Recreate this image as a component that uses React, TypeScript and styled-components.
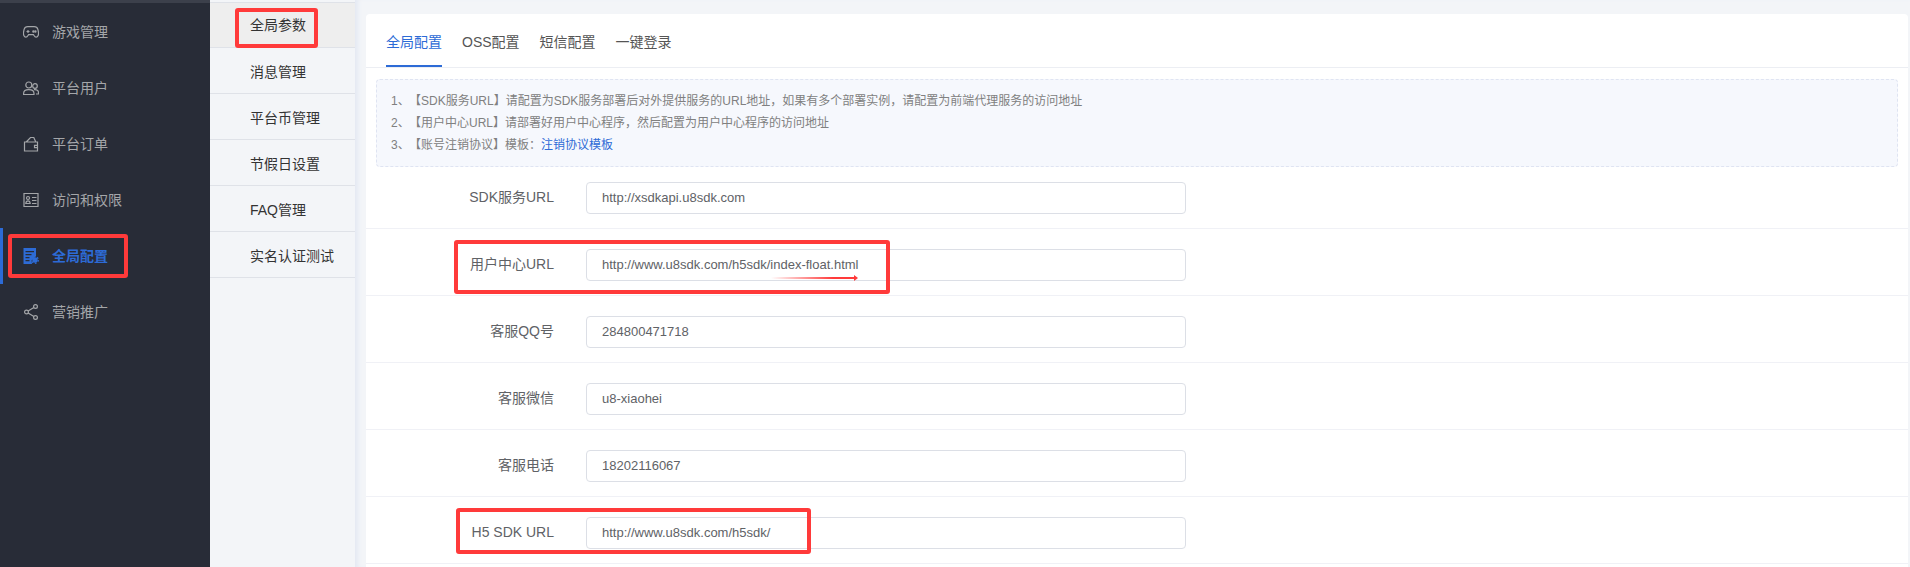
import { ReactNode } from 'react'
import styled, { createGlobalStyle } from 'styled-components'

const GlobalStyle = createGlobalStyle`
  html, body {
    margin: 0;
    padding: 0;
    height: 100%;
    overflow: hidden;
    background: #f3f5f8;
    font-family: "Liberation Sans", "Noto Sans CJK SC", sans-serif;
  }
  * { box-sizing: border-box; }
`

const Page = styled.div`
  position: relative;
  display: flex;
  width: 1910px;
  height: 567px;
  overflow: hidden;
`

const Sidebar = styled.aside`
  width: 210px;
  flex: none;
  padding-top: 1px;
  background: #282c37;
  border-top: 3px solid #3c404b;
`

const SideItem = styled.div<{ $active?: boolean }>`
  display: flex;
  align-items: center;
  height: 56px;
  padding-left: 23px;
  gap: 13px;
  font-size: 14px;
  color: ${({ $active }) => ($active ? '#2d6bd6' : '#a4a6a9')};
  font-weight: ${({ $active }) => ($active ? 600 : 400)};
  box-shadow: ${({ $active }) => ($active ? 'inset 3px 0 0 #2d6bd6' : 'none')};

  svg {
    width: 16px;
    height: 16px;
    flex: none;
  }

  span {
    padding-bottom: 2px;
  }
`

const SubMenu = styled.nav`
  width: 145px;
  flex: none;
  padding-top: 2px;
  background: #f3f5f8;
`

const SubItem = styled.div<{ $active?: boolean }>`
  display: flex;
  align-items: center;
  height: 46px;
  padding: 0 0 ${({ $active }) => ($active ? 2 : 0)}px 40px;
  font-size: 14px;
  color: #333;
  background: ${({ $active }) => ($active ? '#eeeeee' : 'transparent')};
  border-bottom: 1px solid #dfe2e8;
  ${({ $active }) => $active && 'border-top: 1px solid #dfe2e8;'}
`

const Content = styled.main`
  flex: 1;
  padding: 14px 2px 0 11px;
  background: #f3f5f8;
  box-shadow: inset 5px 0 4px -2px #e4e9f3;
`

const Card = styled.section`
  height: 100%;
  background: #fff;
  border-radius: 4px 4px 0 0;
`

const Tabs = styled.div`
  display: flex;
  gap: 20px;
  height: 54px;
  padding-left: 20px;
  border-bottom: 1px solid #eceef3;
`

const Tab = styled.div<{ $active?: boolean }>`
  height: 53px;
  line-height: 57px;
  font-size: 14px;
  color: ${({ $active }) => ($active ? '#2d6bd6' : '#555')};
  border-bottom: 2px solid ${({ $active }) => ($active ? '#2d6bd6' : 'transparent')};
`

const Notice = styled.div`
  height: 88px;
  margin: 11px 10px 0;
  padding: 10px 14px;
  font-size: 12px;
  line-height: 22px;
  color: #808080;
  background: #f6f8fd;
  border: 1px dashed #dfe4f2;
  border-radius: 4px;

  a {
    color: #2d6bd6;
    text-decoration: none;
  }
`

const Num = styled.span`
  display: inline-block;
  width: 18px;
`

const Form = styled.div`
  margin-top: -5px;
`

const FormRow = styled.div`
  display: flex;
  align-items: flex-start;
  height: 67px;
  padding-top: 20px;
  border-bottom: 1px solid #f0f1f6;
`

const Label = styled.label`
  width: 188px;
  flex: none;
  font-size: 14px;
  line-height: 30px;
  text-align: right;
  color: #606266;
`

const Input = styled.div`
  width: 600px;
  height: 32px;
  margin-left: 32px;
  padding-left: 15px;
  font-size: 13px;
  line-height: 30px;
  color: #606266;
  border: 1px solid #dcdfe6;
  border-radius: 4px;
`

const Mark = styled.div<{ $x: number; $y: number; $w: number; $h: number }>`
  position: absolute;
  left: ${({ $x }) => $x}px;
  top: ${({ $y }) => $y}px;
  width: ${({ $w }) => $w}px;
  height: ${({ $h }) => $h}px;
  border: 4px solid #ff3a3a;
  border-radius: 3px;
`

const Arrow = styled.div`
  position: absolute;
  left: 771px;
  top: 277px;
  width: 83px;
  height: 2px;
  background: linear-gradient(90deg, rgba(255, 58, 58, 0), #ff3a3a 75%);

  &::after {
    content: '';
    position: absolute;
    right: -4px;
    top: -2px;
    border-left: 4px solid #ff3a3a;
    border-top: 3px solid transparent;
    border-bottom: 3px solid transparent;
  }
`

const stroke = { fill: 'none', stroke: 'currentColor', strokeWidth: 1.2 }

const GameIcon = () => (
  <svg viewBox="0 0 16 16" {...stroke}>
    <path d="M4.800 2.600h6.400c2 0 3.200 1 3.700 2.800l.5 2.400c.5 2.700-.4 5.400-2.300 5.400-1.300 0-1.900-1.400-2.700-2.600H5.600c-.8 1.200-1.400 2.600-2.700 2.600C1 13.200.1 10.500.6 7.800l.5-2.400C1.600 3.600 2.800 2.600 4.800 2.600z" />
    <path d="M5 6v3M3.500 7.500h3" />
    <circle cx="10.400" cy="7.500" r=".6" fill="currentColor" />
    <circle cx="12.400" cy="7.500" r=".6" fill="currentColor" />
  </svg>
)

const UsersIcon = () => (
  <svg viewBox="0 0 16 16" {...stroke}>
    <circle cx="5.800" cy="5" r="3" />
    <circle cx="12" cy="6" r="2.300" />
    <path d="M.6 14.500v-1c0-2.400 2-3.800 5.200-3.800s5.200 1.400 5.200 3.800v1zM11 9.700c2.800-.3 4.500.8 4.500 3v1.300h-2.500" />
  </svg>
)

const WalletIcon = () => (
  <svg viewBox="0 0 16 16" {...stroke}>
    <path d="M1.500 6h13v9h-13zM3.200 6l4.300-4.500h3.300L12.800 6" />
    <path d="M14.500 9.300h-3v2.400h3" />
  </svg>
)

const IdIcon = () => (
  <svg viewBox="0 0 16 16" {...stroke}>
    <path d="M1 1.500h14v13H1z" />
    <circle cx="5" cy="6" r="1.500" />
    <path d="M2.800 11.500c.2-1.800 1-2.600 2.200-2.600s2 .8 2.200 2.600zM9 5.500h4.500M9 8.500h4.500M9 11.500h4.500" />
  </svg>
)

const ConfigIcon = () => (
  <svg viewBox="0 0 16 16">
    <path
      fill="currentColor"
      fillRule="evenodd"
      d="M.5 0h12.500v8l-4.500 4.500.5 3.500H.5zM2.500 3v1.300h8.500V3zm0 3v1.300h6V6zm0 3v1.300h4V9zm0 3v1.300h4V12z"
    />
    <circle cx="12" cy="12" r="2.700" fill="currentColor" />
    <circle cx="12" cy="12" r="3.300" fill="none" stroke="currentColor" strokeWidth="1.300" strokeDasharray="1.700 1.750" />
  </svg>
)

const ShareIcon = () => (
  <svg viewBox="0 0 16 16" {...stroke}>
    <circle cx="12.500" cy="2.500" r="1.900" />
    <circle cx="3.500" cy="8" r="1.900" />
    <circle cx="12.500" cy="13.500" r="1.900" />
    <path d="M10.900 3.500 5.100 7M5.100 9l5.800 3.500" />
  </svg>
)

const sideItems: { icon: ReactNode; label: string; active?: boolean }[] = [
  { icon: <GameIcon />, label: '游戏管理' },
  { icon: <UsersIcon />, label: '平台用户' },
  { icon: <WalletIcon />, label: '平台订单' },
  { icon: <IdIcon />, label: '访问和权限' },
  { icon: <ConfigIcon />, label: '全局配置', active: true },
  { icon: <ShareIcon />, label: '营销推广' },
]

const subItems = ['全局参数', '消息管理', '平台币管理', '节假日设置', 'FAQ管理', '实名认证测试']

const tabs = ['全局配置', 'OSS配置', '短信配置', '一键登录']

const fields = [
  { label: 'SDK服务URL', value: 'http://xsdkapi.u8sdk.com' },
  { label: '用户中心URL', value: 'http://www.u8sdk.com/h5sdk/index-float.html' },
  { label: '客服QQ号', value: '284800471718' },
  { label: '客服微信', value: 'u8-xiaohei' },
  { label: '客服电话', value: '18202116067' },
  { label: 'H5 SDK URL', value: 'http://www.u8sdk.com/h5sdk/' },
]

export default function App() {
  return (
    <Page>
      <GlobalStyle />
      <Sidebar>
        {sideItems.map((item) => (
          <SideItem key={item.label} $active={item.active}>
            {item.icon}
            <span>{item.label}</span>
          </SideItem>
        ))}
      </Sidebar>
      <SubMenu>
        {subItems.map((item, i) => (
          <SubItem key={item} $active={i === 0}>
            {item}
          </SubItem>
        ))}
      </SubMenu>
      <Content>
        <Card>
          <Tabs>
            {tabs.map((tab, i) => (
              <Tab key={tab} $active={i === 0}>
                {tab}
              </Tab>
            ))}
          </Tabs>
          <Notice>
            <div><Num>1、</Num>【SDK服务URL】请配置为SDK服务部署后对外提供服务的URL地址，如果有多个部署实例，请配置为前端代理服务的访问地址</div>
            <div><Num>2、</Num>【用户中心URL】请部署好用户中心程序，然后配置为用户中心程序的访问地址</div>
            <div><Num>3、</Num>【账号注销协议】模板：<a href="#">注销协议模板</a></div>
          </Notice>
          <Form>
            {fields.map((field) => (
              <FormRow key={field.label}>
                <Label>{field.label}</Label>
                <Input>{field.value}</Input>
              </FormRow>
            ))}
          </Form>
        </Card>
      </Content>
      <Mark $x={8} $y={234} $w={120} $h={44} />
      <Mark $x={235} $y={8} $w={83} $h={40} />
      <Mark $x={454} $y={240} $w={436} $h={54} />
      <Mark $x={456} $y={508} $w={355} $h={46} />
      <Arrow />
    </Page>
  )
}
